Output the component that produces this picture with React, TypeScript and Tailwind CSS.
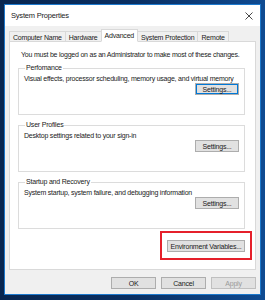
const font = "font-['Liberation_Sans',Arial,sans-serif]";

const Btn = ({ label, className = "" }: { label: string; className?: string }) => (
  <div
    className={`flex items-center justify-center h-[12px] border border-[#adadad] bg-[#e1e1e1] text-[7px] tracking-[-0.2px] leading-none whitespace-nowrap text-[#1a1a1a] ${className}`}
  >
    {label}
  </div>
);

const Group = ({ title, text, focused = false }: { title: string; text: string; focused?: boolean }) => (
  <fieldset className="h-[51px] border border-[#dcdcdc] ml-[8px] mr-[10px] px-[5px] pb-[6px] flex flex-col">
    <legend className="ml-[1px] px-[1px] text-[7px] tracking-[-0.2px] leading-[8px] whitespace-nowrap text-[#1a1a1a]">{title}</legend>
    <p className="text-[7px] tracking-[-0.22px] leading-[8px] whitespace-nowrap text-[#1a1a1a] mt-[3px]">{text}</p>
    <div className="flex-1" />
    <div className="flex justify-end">
      <Btn
        label="Settings..."
        className={`w-[44px] ${focused ? "border-[#0078d7] shadow-[inset_0_0_0_1px_#0078d7]" : ""}`}
      />
    </div>
  </fieldset>
);

const tabs = ["Computer Name", "Hardware", "Advanced", "System Protection", "Remote"];

export default function App() {
  return (
    <div className={`w-[265px] h-[300px] bg-gradient-to-r from-[#082650] via-[#0a2f62] to-[#0f4b92] pl-[4px] pt-[4px] ${font}`}>
      <div className="w-[257px] h-[291px] border border-[#1c78cc] bg-[#f0f0f0] flex flex-col">
        {/* title bar */}
        <div className="h-[21px] bg-white flex items-center justify-between pl-[6px] pr-[6px] pt-[1px]">
          <span className="text-[7.5px] tracking-[-0.2px] text-[#1a1a1a]">System Properties</span>
          <svg width="8" height="8" viewBox="0 0 8 8" className="mr-[1px]">
            <path d="M0.5 0.5 L7.5 7.5 M7.5 0.5 L0.5 7.5" stroke="#333" strokeWidth="0.9" />
          </svg>
        </div>

        {/* tabs */}
        <div className="flex items-end pl-[4px] pt-[4px] h-[16px]">
          {tabs.map((t) => {
            const active = t === "Advanced";
            return (
              <div
                key={t}
                className={`px-[3px] text-[7px] tracking-[-0.2px] whitespace-nowrap leading-none flex items-center border border-[#d9d9d9] -mr-px ${
                  active ? "h-[13px] bg-white border-b-white relative z-10" : "h-[11px] bg-[#f0f0f0] border-b-0"
                } text-[#1a1a1a]`}
              >
                {t}
              </div>
            );
          })}
        </div>

        {/* panel */}
        <div className="mx-[4px] h-[229px] -mt-px bg-white border border-[#d9d9d9] flex flex-col">
          <p className="text-[7px] tracking-[-0.22px] leading-[8px] whitespace-nowrap text-[#1a1a1a] mt-[9px] ml-[11px]">
            You must be logged on as an Administrator to make most of these changes.
          </p>
          <div className="mt-[5px] flex flex-col gap-[6px]">
            <Group title="Perfomance" text="Visual effects, processor scheduling, memory usage, and virtual memory" focused />
            <Group title="User Profiles" text="Desktop settings related to your sign-in" />
            <Group title="Startup and Recovery" text="System startup, system failure, and debugging information" />
          </div>
          <div className="flex justify-end mr-[3px] mt-[2px]">
            <div className="border-2 border-[#e5202b] px-[5px] pt-[7px] pb-[6px]">
              <Btn label="Environment Variables..." className="w-[78px]" />
            </div>
          </div>
        </div>

        {/* bottom buttons */}
        <div className="flex justify-end gap-[5px] mt-[7px] pr-[4px]">
          <Btn label="OK" className="w-[45px]" />
          <Btn label="Cancel" className="w-[45px]" />
          <Btn label="Apply" className="w-[45px] bg-[#cccccc] border-[#bfbfbf] text-[#9a9a9a]" />
        </div>
      </div>
    </div>
  );
}
